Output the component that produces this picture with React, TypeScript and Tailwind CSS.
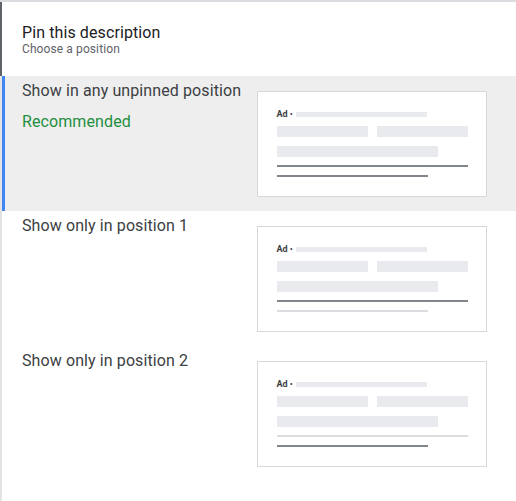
import React from 'react';

type Row = {
  label: string;
  note?: string;
  selected?: boolean;
  dark: [boolean, boolean];
};

const rows: Row[] = [
  { label: 'Show in any unpinned position', note: 'Recommended', selected: true, dark: [true, true] },
  { label: 'Show only in position 1', dark: [true, false] },
  { label: 'Show only in position 2', dark: [false, true] },
];

const AdPreview = ({ dark }: { dark: [boolean, boolean] }) => (
  <div className="w-[230px] h-[106px] bg-white border-[1.5px] border-[#d6d8db] pl-[18.5px] pt-[17.5px]">
    <div className="flex items-center h-[9px]">
      <span className="text-[9px] leading-none font-bold text-[#3c4043]">Ad</span>
      <span className="ml-[2px] text-[9px] leading-none text-[#3c4043]">•</span>
      <div className="ml-[3px] w-[131px] h-[5px] bg-[#e8eaed]" />
    </div>
    <div className="mt-[7px] flex gap-[9px]">
      <div className="w-[91px] h-[11px] bg-[#e8eaed]" />
      <div className="w-[91px] h-[11px] bg-[#e8eaed]" />
    </div>
    <div className="mt-[9px] w-[161px] h-[11px] bg-[#e8eaed]" />
    <div className={`mt-[8px] w-[191px] h-[2px] ${dark[0] ? 'bg-[#80868b]' : 'bg-[#dadce0]'}`} />
    <div className={`mt-[8px] w-[151px] h-[2px] ${dark[1] ? 'bg-[#80868b]' : 'bg-[#dadce0]'}`} />
  </div>
);

export default function App() {
  return (
    <div
      className="w-[516px] h-[501px] bg-white border-t-2 border-[#dadce0] flex flex-col"
      style={{ fontFamily: 'Roboto, "Noto Sans", sans-serif' }}
    >
      {/* Header */}
      <div className="h-[74px] border-l-2 border-[#5f6368] pl-[20px] pt-[22px]">
        <div className="text-[16px] leading-[18px] tracking-[0.1px] text-[#202124]">Pin this description</div>
        <div className="text-[12px] leading-[14px] tracking-[0.1px] text-[#5f6368]">Choose a position</div>
      </div>

      {/* Options */}
      {rows.map((row) => (
        <div
          key={row.label}
          className={`h-[135px] border-l-2 border-[#e3e3e3] ${row.selected ? 'bg-[#eeeeee]' : 'bg-white'}`}
        >
          <div
            className={`h-full flex justify-between pr-[29px] border-l-[3px] ${
              row.selected ? 'border-[#4285f4]' : 'border-transparent'
            }`}
          >
            <div className="pl-[17px] pt-[5px]">
              <div className="text-[16px] leading-[20px] tracking-[0.1px] text-[#3c4043]">{row.label}</div>
              {row.note && (
                <div className="mt-[11px] text-[16px] leading-[20px] tracking-[0.1px] text-[#1e8e3e]">{row.note}</div>
              )}
            </div>
            <div className="pt-[15px]">
              <AdPreview dark={row.dark} />
            </div>
          </div>
        </div>
      ))}

      <div className="flex-1 border-l-2 border-[#e3e3e3]" />
    </div>
  );
}
